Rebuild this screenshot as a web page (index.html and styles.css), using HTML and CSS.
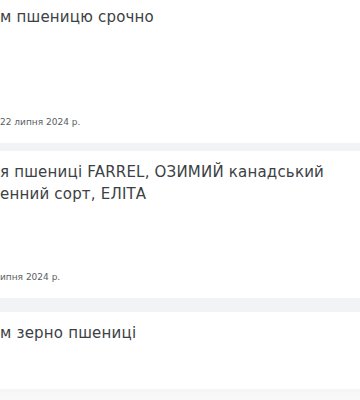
FILE: index.html
```html
<!DOCTYPE html>
<html lang="uk">
<head>
    <meta charset="UTF-8">
    <meta name="viewport" content="width=device-width, initial-scale=1.0">
    <title>Оголошення</title>
    <link rel="stylesheet" href="styles.css">
</head>
<body>
    <div class="ads-list">
        <div class="ad-card">
            <div class="ad-title">м пшеницю срочно</div>
            <div class="ad-date">22 липня 2024 р.</div>
        </div>
        <div class="ad-card ad-card-wide-gap">
            <div class="ad-title">я пшениці FARREL, ОЗИМИЙ канадський<br>енний сорт, ЕЛІТА</div>
            <div class="ad-date">ипня 2024 р.</div>
        </div>
        <div class="ad-card ad-card-last">
            <div class="ad-title">м зерно пшениці</div>
        </div>
    </div>
    <div class="bottom-fade"></div>
</body>
</html>
```

FILE: styles.css
```css
html, body {
    margin: 0;
    padding: 0;
    height: 100%;
    overflow: hidden;
    background-color: #f2f3f4;
    font-family: "DejaVu Sans", "Noto Sans", sans-serif;
}

.ads-list {
    display: flex;
    flex-direction: column;
    gap: 8px;
    margin-top: -4px;
}

.ad-card {
    display: flex;
    flex-direction: column;
    box-sizing: border-box;
    height: 147px;
    padding: 10px 0 15px 0;
    background-color: #fff;
}

.ad-card-wide-gap {
    margin-bottom: 6px;
}

/* last card is cut by the bottom bar */
.ad-card-last {
    height: 77px;
}

.ad-title {
    font-size: 15px;
    line-height: 22px;
    letter-spacing: 0.2px;
    color: #3b4144;
}

.ad-date {
    margin-top: auto;
    font-size: 9px;
    line-height: 12px;
    color: #5a5e61;
}

.bottom-fade {
    height: 20px;
    background: linear-gradient(#f5f5f5, #fbfbfb);
}
```
